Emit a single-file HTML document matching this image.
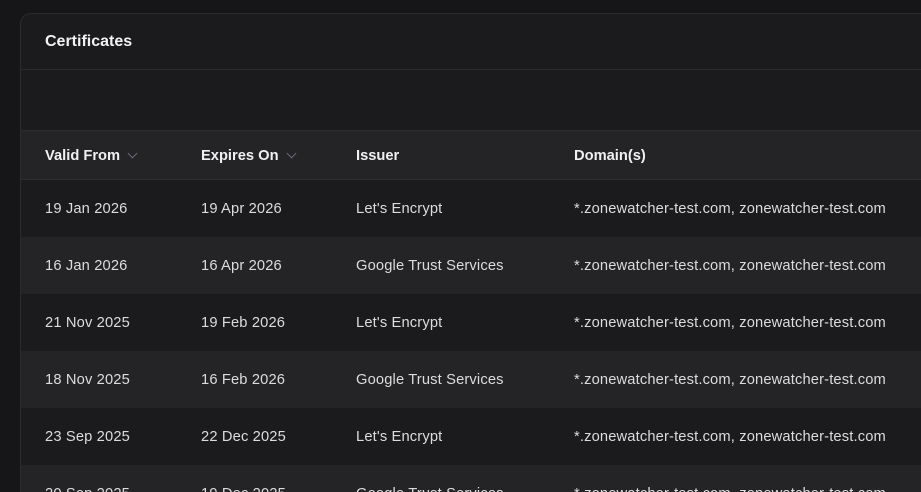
<!DOCTYPE html>
<html style="overflow:hidden;height:492px"><head><style>
*{margin:0;padding:0;box-sizing:border-box}
body{width:921px;height:492px;background:#161618;overflow:hidden;position:relative;font-family:"Liberation Sans",sans-serif;color:#e6e6e8}
.card{position:absolute;left:20px;top:13px;width:901px;height:479px;background:#1b1b1e;border:1px solid #2c2c30;border-right:none;border-bottom:none;border-radius:11px 0 0 0;overflow:hidden}
.title{position:absolute;left:24px;top:19px;font-size:16px;font-weight:bold;color:#f2f2f4}
.hr{position:absolute;left:0;right:0;top:55px;height:1px;background:#2c2c30}
.row{position:absolute;left:0;width:900px;height:57px;font-size:14.7px;letter-spacing:0.15px;color:#dcdcde;overflow:hidden}
.row span{position:absolute;top:21px;line-height:17px;white-space:nowrap}
.head{background:#242427;border-top:1px solid #2c2c30;border-bottom:1px solid #2c2c30;font-weight:bold;color:#f0f0f2;height:50px;letter-spacing:0}
.head span{top:17px}
.alt{background:#242427}
.c1{left:24px}.c2{left:180px}.c3{left:335px}.c4{left:553px}
.chev{display:inline-block;width:7px;height:7px;border-right:1.5px solid #6a6a70;border-bottom:1.5px solid #6a6a70;transform:rotate(45deg);margin-left:9px;position:relative;top:-3px}
</style></head><body>
<div class="card">
<div class="title">Certificates</div>
<div class="hr"></div>
<div class="row head" style="top:116px"><span class="c1">Valid From<i class="chev"></i></span><span class="c2">Expires On<i class="chev"></i></span><span class="c3">Issuer</span><span class="c4">Domain(s)</span></div>
<div class="row" style="top:166px"><span class="c1">19 Jan 2026</span><span class="c2">19 Apr 2026</span><span class="c3">Let's Encrypt</span><span class="c4">*.zonewatcher-test.com, zonewatcher-test.com</span></div>
<div class="row alt" style="top:223px"><span class="c1">16 Jan 2026</span><span class="c2">16 Apr 2026</span><span class="c3">Google Trust Services</span><span class="c4">*.zonewatcher-test.com, zonewatcher-test.com</span></div>
<div class="row" style="top:280px"><span class="c1">21 Nov 2025</span><span class="c2">19 Feb 2026</span><span class="c3">Let's Encrypt</span><span class="c4">*.zonewatcher-test.com, zonewatcher-test.com</span></div>
<div class="row alt" style="top:337px"><span class="c1">18 Nov 2025</span><span class="c2">16 Feb 2026</span><span class="c3">Google Trust Services</span><span class="c4">*.zonewatcher-test.com, zonewatcher-test.com</span></div>
<div class="row" style="top:394px"><span class="c1">23 Sep 2025</span><span class="c2">22 Dec 2025</span><span class="c3">Let's Encrypt</span><span class="c4">*.zonewatcher-test.com, zonewatcher-test.com</span></div>
<div class="row alt" style="top:451px;height:28px"><span class="c1">20 Sep 2025</span><span class="c2">19 Dec 2025</span><span class="c3">Google Trust Services</span><span class="c4">*.zonewatcher-test.com, zonewatcher-test.com</span></div>
</div>
</body></html>
